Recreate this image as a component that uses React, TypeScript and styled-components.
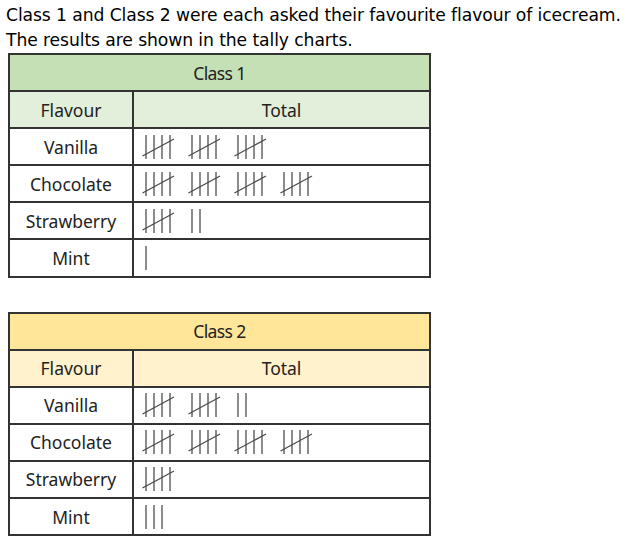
import React from "react";
import styled, { createGlobalStyle } from "styled-components";

const Global = createGlobalStyle`
  html, body { margin: 0; padding: 0; background: #fff; }
  body { font-family: "DejaVu Sans", Verdana, sans-serif; color: #000; }
`;

const Page = styled.div`
  width: 627px;
  height: 539px;
  padding: 3px 0 0 6px;
  box-sizing: border-box;
  display: flex;
  flex-direction: column;
`;

const Intro = styled.p`
  margin: 0;
  font-size: 17.2px;
  line-height: 25px;
  letter-spacing: -0.1px;
`;

const Table = styled.table<{ $mt: number }>`
  margin-top: ${(p) => p.$mt}px;
  margin-left: 2px;
  width: 423px;
  border-collapse: collapse;
  font-family: "Noto Sans", sans-serif;
  font-size: 17.5px;
  color: #222;
  table-layout: fixed;
`;

const Cell = styled.td`
  border: 2px solid #333;
  height: 35.1px;
  padding: 0;
  text-align: center;
  vertical-align: middle;
`;

const TitleCell = styled(Cell)<{ $bg: string }>`
  background: ${(p) => p.$bg};
  letter-spacing: -0.6px;
`;

const HeadCell = styled(Cell)<{ $bg: string }>`
  background: ${(p) => p.$bg};
`;

const TallyCell = styled(Cell)`
  text-align: left;
  padding-left: 8px;
`;

const TallyRow = styled.div`
  display: flex;
  align-items: center;
  gap: 12px;
`;

const Group = ({ n }: { n: number }) => {
  const xs = [4, 12, 20, 28].slice(0, Math.min(n, 4));
  return (
    <svg width="34" height="28" viewBox="0 0 34 28">
      {xs.map((x) => (
        <line key={x} x1={x} y1={2} x2={x} y2={26} stroke="#8c8c8c" strokeWidth={2} />
      ))}
      {n === 5 && <line x1={0.5} y1={23} x2={32} y2={6} stroke="#4a4a4a" strokeWidth={1.2} />}
    </svg>
  );
};

const Tally = ({ count }: { count: number }) => {
  const groups: number[] = [];
  let c = count;
  while (c >= 5) {
    groups.push(5);
    c -= 5;
  }
  if (c > 0) groups.push(c);
  return (
    <TallyRow>
      {groups.map((g, i) => (
        <Group key={i} n={g} />
      ))}
    </TallyRow>
  );
};

type Data = { title: string; dark: string; light: string; rows: [string, number][] };

const Chart = ({ d, mt }: { d: Data; mt: number }) => (
  <Table $mt={mt}>
    <colgroup>
      <col style={{ width: 124 }} />
      <col />
    </colgroup>
    <tbody>
      <tr>
        <TitleCell colSpan={2} $bg={d.dark}>
          {d.title}
        </TitleCell>
      </tr>
      <tr>
        <HeadCell $bg={d.light}>Flavour</HeadCell>
        <HeadCell $bg={d.light}>Total</HeadCell>
      </tr>
      {d.rows.map(([name, n]) => (
        <tr key={name}>
          <Cell>{name}</Cell>
          <TallyCell>
            <Tally count={n} />
          </TallyCell>
        </tr>
      ))}
    </tbody>
  </Table>
);

const class1: Data = {
  title: "Class 1",
  dark: "#c5e0b4",
  light: "#e2efda",
  rows: [
    ["Vanilla", 15],
    ["Chocolate", 20],
    ["Strawberry", 7],
    ["Mint", 1],
  ],
};

const class2: Data = {
  title: "Class 2",
  dark: "#ffe699",
  light: "#fff2cc",
  rows: [
    ["Vanilla", 12],
    ["Chocolate", 20],
    ["Strawberry", 5],
    ["Mint", 3],
  ],
};

export default function App() {
  return (
    <>
      <Global />
      <Page>
        <Intro>Class 1 and Class 2 were each asked their favourite flavour of icecream.</Intro>
        <Intro>The results are shown in the tally charts.</Intro>
        <Chart d={class1} mt={0} />
        <Chart d={class2} mt={34} />
      </Page>
    </>
  );
}
